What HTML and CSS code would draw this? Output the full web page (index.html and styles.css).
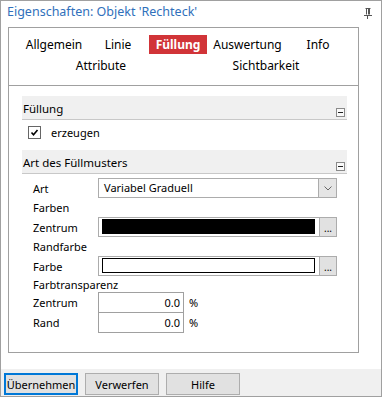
FILE: index.html
```html
<!DOCTYPE html>
<html lang="de">
<head>
    <meta charset="UTF-8">
    <title>Eigenschaften</title>
    <link rel="stylesheet" href="styles.css">
</head>
<body>
    <div class="window">
        <div class="titlebar">
            <span class="title">Eigenschaften: Objekt 'Rechteck'</span>
            <svg class="pin" width="8" height="11" viewBox="0 0 8 11">
                <path d="M1.5 0.5h5M2.5 0.5v6M5.5 0.5v6M4.5 0.5v6M0 7.5h8M3.5 7.5v3.5" stroke="#555" stroke-width="1" fill="none"/>
            </svg>
        </div>

        <div class="panel">
            <div class="tabs">
                <div class="tab-row first">
                    <span class="tab">Allgemein</span>
                    <span class="tab">Linie</span>
                    <span class="tab active">Füllung</span>
                    <span class="tab">Auswertung</span>
                    <span class="tab">Info</span>
                </div>
                <div class="tab-row second">
                    <span class="tab">Attribute</span>
                    <span class="tab">Sichtbarkeit</span>
                </div>
            </div>

            <div class="content">
                <div class="section-head">
                    <span class="section-title">Füllung</span>
                    <span class="collapse"></span>
                </div>
                <div class="check-row">
                    <span class="checkbox">
                        <svg width="9" height="9" viewBox="0 0 9 9">
                            <path d="M1.5 4.5l2 2.2L7.5 2" stroke="#000" stroke-width="1.6" fill="none"/>
                        </svg>
                    </span>
                    <span>erzeugen</span>
                </div>

                <div class="section-head">
                    <span class="section-title">Art des Füllmusters</span>
                    <span class="collapse"></span>
                </div>
                <div class="fields">
                    <div class="row tall">
                        <span class="label">Art</span>
                        <div class="combo">
                            <span class="combo-text">Variabel Graduell</span>
                            <span class="combo-btn">
                                <svg width="8" height="5" viewBox="0 0 8 5">
                                    <path d="M0.5 0.5l3.5 3.5 3.5-3.5" stroke="#666" stroke-width="1" fill="none"/>
                                </svg>
                            </span>
                        </div>
                    </div>
                    <div class="row">
                        <span class="label">Farben</span>
                    </div>
                    <div class="row tall">
                        <span class="label">Zentrum</span>
                        <div class="picker">
                            <span class="swatch black"></span>
                            <span class="dots">...</span>
                        </div>
                    </div>
                    <div class="row">
                        <span class="label">Randfarbe</span>
                    </div>
                    <div class="row tall">
                        <span class="label">Farbe</span>
                        <div class="picker">
                            <span class="swatch"></span>
                            <span class="dots">...</span>
                        </div>
                    </div>
                    <div class="row short">
                        <span class="label">Farbtransparenz</span>
                    </div>
                    <div class="row tall">
                        <span class="label">Zentrum</span>
                        <span class="num">0.0</span>
                        <span class="unit">%</span>
                    </div>
                    <div class="row tall">
                        <span class="label">Rand</span>
                        <span class="num">0.0</span>
                        <span class="unit">%</span>
                    </div>
                </div>
            </div>
        </div>

        <div class="buttonbar">
            <button class="btn default">Übernehmen</button>
            <button class="btn">Verwerfen</button>
            <button class="btn">Hilfe</button>
        </div>
    </div>
</body>
</html>
```

FILE: styles.css
```css
body {
    margin: 0;
    background: #fff;
    font-family: "Noto Sans", "Open Sans", sans-serif;
    font-size: 11px;
    color: #000;
}
.window {
    width: 382px;
    height: 397px;
    box-sizing: border-box;
    border: 1px solid #a0a0a0;
    display: flex;
    flex-direction: column;
}
.titlebar {
    height: 26px;
    box-sizing: border-box;
    padding: 3px 0 0 6px;
    display: flex;
    justify-content: space-between;
    align-items: flex-start;
}
.title {
    font-size: 12.5px;
    line-height: 16px;
    color: #3070bb;
}
.pin {
    margin: 4px 9px 0 0;
}
.panel {
    margin-left: 7px;
    width: 351px;
    height: 326px;
    flex: none;
    box-sizing: border-box;
    border: 1px solid #a0a0a0;
}
.tabs {
    height: 58px;
    box-sizing: border-box;
    padding-top: 7px;
    border-bottom: 1px solid #a0a0a0;
}
.tab-row {
    display: grid;
    height: 19px;
}
.tab-row.first {
    grid-template-columns: 66px 62px 58px 81px 60px;
    padding-left: 12px;
}
.tab-row.second {
    grid-template-columns: 90px 90px;
    column-gap: 75px;
    padding-left: 47px;
    margin-top: 2px;
}
.tab {
    text-align: center;
    font-size: 12px;
    line-height: 19px;
}
.tab.active {
    background: #d13438;
    color: #fff;
    font-weight: bold;
}
.content {
    padding: 10px 11px 0 13px;
}
.section-head {
    height: 23px;
    background: #f0f0f0;
    border-bottom: 1px solid #c8c8c8;
    display: flex;
    justify-content: space-between;
    padding-left: 1px;
}
.section-title {
    padding-top: 6px;
    line-height: 14px;
    font-size: 11.5px;
}
.collapse {
    width: 9px;
    height: 9px;
    box-sizing: border-box;
    border: 1px solid #8a8a8a;
    background: #fafafa;
    align-self: flex-end;
    margin: 0 2px 2px 0;
    display: flex;
    align-items: center;
    justify-content: center;
}
.collapse::after {
    content: "";
    width: 5px;
    height: 1px;
    background: #222;
}
.check-row {
    height: 30px;
    box-sizing: border-box;
    padding: 6px 0 0 6px;
    display: flex;
    align-items: flex-start;
    line-height: 13px;
}
.checkbox {
    width: 13px;
    height: 13px;
    box-sizing: border-box;
    border: 1px solid #666;
    background: #fff;
    margin-right: 10px;
    display: flex;
    align-items: center;
    justify-content: center;
}
.fields {
    padding-top: 4px;
}
.row {
    display: flex;
    align-items: center;
    height: 19px;
}
.row.tall {
    height: 20px;
}
.row.short {
    height: 16px;
}
.label {
    width: 76px;
    box-sizing: border-box;
    padding-left: 11px;
    flex: none;
}
.combo, .picker {
    width: 239px;
    height: 20px;
    box-sizing: border-box;
    border: 1px solid #acacac;
    background: #fff;
    display: flex;
}
.combo-text {
    flex: 1;
    padding-left: 5px;
    line-height: 18px;
}
.combo-btn {
    width: 18px;
    box-sizing: border-box;
    background: #e5e5e5;
    border-left: 1px solid #acacac;
    display: flex;
    align-items: center;
    justify-content: center;
}
.swatch {
    flex: 1;
    margin: 1px 4px 2px 3px;
    border: 1px solid #000;
    background: #fff;
}
.swatch.black {
    background: #000;
}
.dots {
    width: 17px;
    box-sizing: border-box;
    background: #e1e1e1;
    border-left: 1px solid #acacac;
    text-align: center;
    font-size: 10px;
    line-height: 20px;
}
.num {
    width: 86px;
    height: 21px;
    margin-bottom: -1px;
    box-sizing: border-box;
    border: 1px solid #a0a0a0;
    text-align: right;
    padding-right: 3px;
    line-height: 19px;
}
.unit {
    margin-left: 5px;
}
.buttonbar {
    margin-top: 16px;
    height: 27px;
    box-sizing: border-box;
    background: #f0f0f0;
    display: flex;
    gap: 7px;
    padding: 4px 0 0 3px;
}
.btn {
    width: 74px;
    height: 22px;
    box-sizing: border-box;
    background: #e1e1e1;
    border: 1px solid #adadad;
    font-family: "Noto Sans", "Open Sans", sans-serif;
    font-size: 11px;
    color: #000;
    padding: 0;
}
.btn.default {
    border: 2px solid #0078d7;
}
```
